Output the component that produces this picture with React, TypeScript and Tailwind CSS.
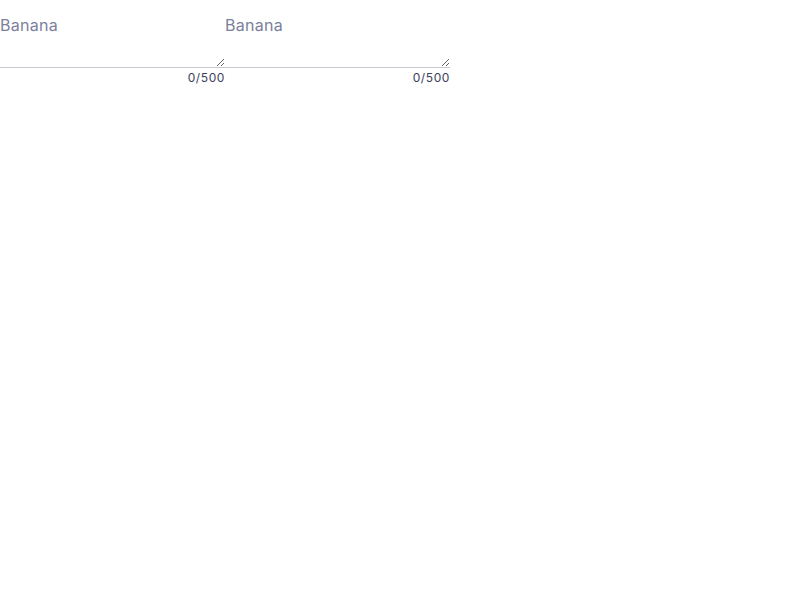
import React, { useState } from "react";

function CountedTextarea() {
  const [value, setValue] = useState("");
  return (
    <div className="flex w-[225px] flex-col">
      <textarea
        value={value}
        maxLength={500}
        onChange={(e) => setValue(e.target.value)}
        placeholder="Banana"
        className="block h-[68px] w-full border-b border-[#c8cad2] bg-white pt-[13px] text-[16px] leading-[24px] tracking-[0.3px] text-[#2c3050] outline-none placeholder:text-[#7b819c]"
      />
      <div className="pt-[2px] text-right text-[12px] leading-[16px] tracking-[0.6px] text-[#3b3f5c]">
        {value.length}/500
      </div>
    </div>
  );
}

export default function App() {
  return (
    <div className="flex bg-white" style={{ fontFamily: "Inter, 'Noto Sans', sans-serif" }}>
      <CountedTextarea />
      <CountedTextarea />
    </div>
  );
}
